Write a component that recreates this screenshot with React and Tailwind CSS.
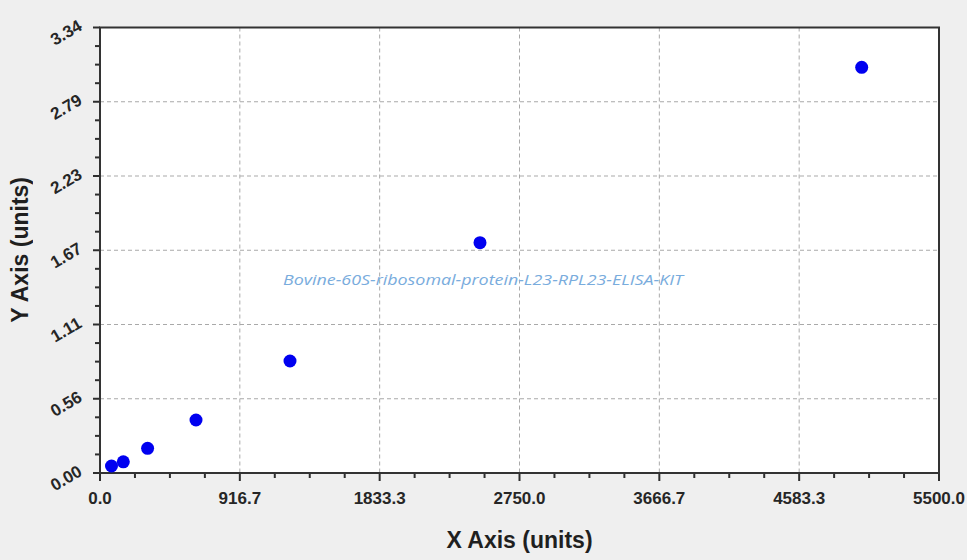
import React from "react";

const plot = { left: 60, right: 899, top: 27.5, bottom: 473 };
const xLabels = ["0.0", "916.7", "1833.3", "2750.0", "3666.7", "4583.3", "5500.0"];
const yLabels = ["0.00", "0.56", "1.11", "1.67", "2.23", "2.79", "3.34"];

// measured dot centres (svg coords)
const points = [
  [71.5, 466],
  [83.3, 461.8],
  [107.6, 448.3],
  [156, 420],
  [250, 361],
  [440, 242.7],
  [821.7, 67.3],
];

const Chart = () => {
  const w = plot.right - plot.left;
  const h = plot.bottom - plot.top;
  const xs = xLabels.map((_, i) => plot.left + (i * w) / 6);
  const ys = yLabels.map((_, i) => plot.bottom - (i * h) / 6);

  const minorX = [];
  const minorY = [];
  for (let i = 0; i < 6; i++) {
    for (let j = 1; j < 4; j++) {
      minorX.push(xs[i] + (j * w) / 24);
      minorY.push(ys[i] - (j * h) / 24);
    }
  }

  return (
    <svg width="927" height="515" className="block shrink-0">
      <rect x={plot.left} y={plot.top} width={w} height={h} fill="#ffffff" />

      {/* grid */}
      {xs.slice(1, 6).map((x) => (
        <line key={"gx" + x} x1={x} x2={x} y1={plot.top} y2={plot.bottom} stroke="#a9a9a9" strokeWidth="1" strokeDasharray="4 3" />
      ))}
      {ys.slice(1, 6).map((y) => (
        <line key={"gy" + y} x1={plot.left} x2={plot.right} y1={y} y2={y} stroke="#a9a9a9" strokeWidth="1" strokeDasharray="4 3" />
      ))}

      <text
        x="243"
        y="284.5"
        fill="#79acdd"
        fontFamily="'Open Sans', 'DejaVu Sans', sans-serif"
        fontStyle="italic"
        fontSize="15"
        textLength="400"
        lengthAdjust="spacingAndGlyphs"
      >
        Bovine-60S-ribosomal-protein-L23-RPL23-ELISA-KIT
      </text>

      {/* ticks */}
      {xs.map((x) => (
        <line key={"tx" + x} x1={x} x2={x} y1={plot.bottom} y2={plot.bottom + 8} stroke="#2e2e2e" strokeWidth="2" />
      ))}
      {minorX.map((x) => (
        <line key={"mx" + x} x1={x} x2={x} y1={plot.bottom} y2={plot.bottom + 5} stroke="#2e2e2e" strokeWidth="2" />
      ))}
      {ys.map((y) => (
        <line key={"ty" + y} x1={plot.left - 7} x2={plot.left} y1={y} y2={y} stroke="#2e2e2e" strokeWidth="2" />
      ))}
      {minorY.map((y) => (
        <line key={"my" + y} x1={plot.left - 5} x2={plot.left} y1={y} y2={y} stroke="#2e2e2e" strokeWidth="2" />
      ))}

      <rect x={plot.left} y={plot.top} width={w} height={h} fill="none" stroke="#333333" strokeWidth="2" />

      {points.map(([x, y]) => (
        <circle key={x} cx={x} cy={y} r="6.5" fill="#0000f0" />
      ))}

      {/* tick labels */}
      <g fontFamily="'Liberation Sans', Arial, sans-serif" fontWeight="700" fontSize="17" fill="#262626">
        {xLabels.map((t, i) => (
          <text key={t} x={xs[i]} y="504" textAnchor="middle">
            {t}
          </text>
        ))}
        {yLabels.map((t, i) => (
          <text
            key={t}
            x="26"
            y={ys[i] + 5}
            dy="0.35em"
            textAnchor="middle"
            transform={`rotate(-30 26 ${ys[i] + 5})`}
          >
            {t}
          </text>
        ))}
      </g>
    </svg>
  );
};

export default function App() {
  return (
    <div className="w-[967px] h-[560px] overflow-hidden bg-[#efefef] flex flex-col font-['Liberation_Sans',Arial,sans-serif] text-[#1f1f1f]">
      <div className="flex h-[515px]">
        <div className="w-[40px] shrink-0 flex items-center justify-center pb-[15px]">
          <span className="[writing-mode:vertical-rl] rotate-180 whitespace-nowrap text-[23px] font-bold leading-none">
            Y Axis (units)
          </span>
        </div>
        <Chart />
      </div>
      <div className="w-[939px] pl-[100px] pt-[14px] text-center text-[23px] font-bold leading-none">
        X Axis (units)
      </div>
    </div>
  );
}
